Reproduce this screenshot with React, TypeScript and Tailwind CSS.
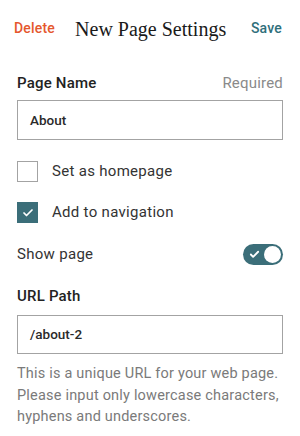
import { Check } from 'lucide-react'

export default function App(): React.JSX.Element {
  return (
    <div className="w-[300px] h-[436px] bg-white font-['Roboto','Liberation_Sans',sans-serif] text-[#222]">
      <div className="flex items-center pl-[14px] pr-[18px] pt-[17px] h-[40px]">
        <button className="text-[14px] font-medium text-[#e5572d] tracking-[0.2px]">Delete</button>
        <h1 className="ml-[20px] font-['Liberation_Serif',serif] text-[20px] text-[#1a1a1a]">
          New Page Settings
        </h1>
        <button className="ml-auto text-[14px] font-medium text-[#2f6f7b] tracking-[0.2px]">Save</button>
      </div>

      <div className="px-[17px] pt-[33px]">
        <div className="flex items-baseline justify-between h-[20px] leading-[20px]">
          <label className="text-[15px] font-medium tracking-[0.2px]">Page Name</label>
          <span className="text-[15px] text-[#8a8a8a] tracking-[0.2px]">Required</span>
        </div>
        <div className="mt-[7px] h-[40px] border border-[#a3a3a3] flex items-center px-[12px] text-[13.5px] font-medium text-[#2a2a2a]">
          About
        </div>

        <div className="mt-[21px] flex items-center gap-[14px] h-[21px]">
          <span className="w-[21px] h-[21px] border border-[#a3a3a3] bg-white" />
          <span className="text-[15px] text-[#333] tracking-[0.3px]">Set as homepage</span>
        </div>
        <div className="mt-[20px] flex items-center gap-[14px] h-[21px]">
          <span className="w-[21px] h-[21px] bg-[#3b6e79] flex items-center justify-center">
            <Check className="w-[12px] h-[12px] text-white" strokeWidth={3.5} />
          </span>
          <span className="text-[15px] text-[#333] tracking-[0.3px]">Add to navigation</span>
        </div>

        <div className="mt-[21px] flex items-center justify-between h-[21px]">
          <span className="text-[15px] text-[#333] tracking-[0.3px]">Show page</span>
          <span className="w-[40px] h-[21px] rounded-full bg-[#3b6e79] flex items-center justify-between pl-[6px] pr-[2px]">
            <Check className="w-[11px] h-[11px] text-white" strokeWidth={4} />
            <span className="w-[17px] h-[17px] rounded-full bg-white" />
          </span>
        </div>

        <label className="block mt-[21px] h-[20px] leading-[20px] text-[15px] font-medium tracking-[0.2px]">URL Path</label>
        <div className="mt-[9px] h-[39px] border border-[#a3a3a3] flex items-center px-[12px] text-[13.5px] font-medium text-[#2a2a2a]">
          /about-2
        </div>
        <p className="mt-[9px] text-[14.5px] leading-[21.5px] text-[#7a7a7a] tracking-[0.2px]">
          This is a unique URL for your web page. Please input only lowercase characters, hyphens and underscores.
        </p>
      </div>
    </div>
  )
}
